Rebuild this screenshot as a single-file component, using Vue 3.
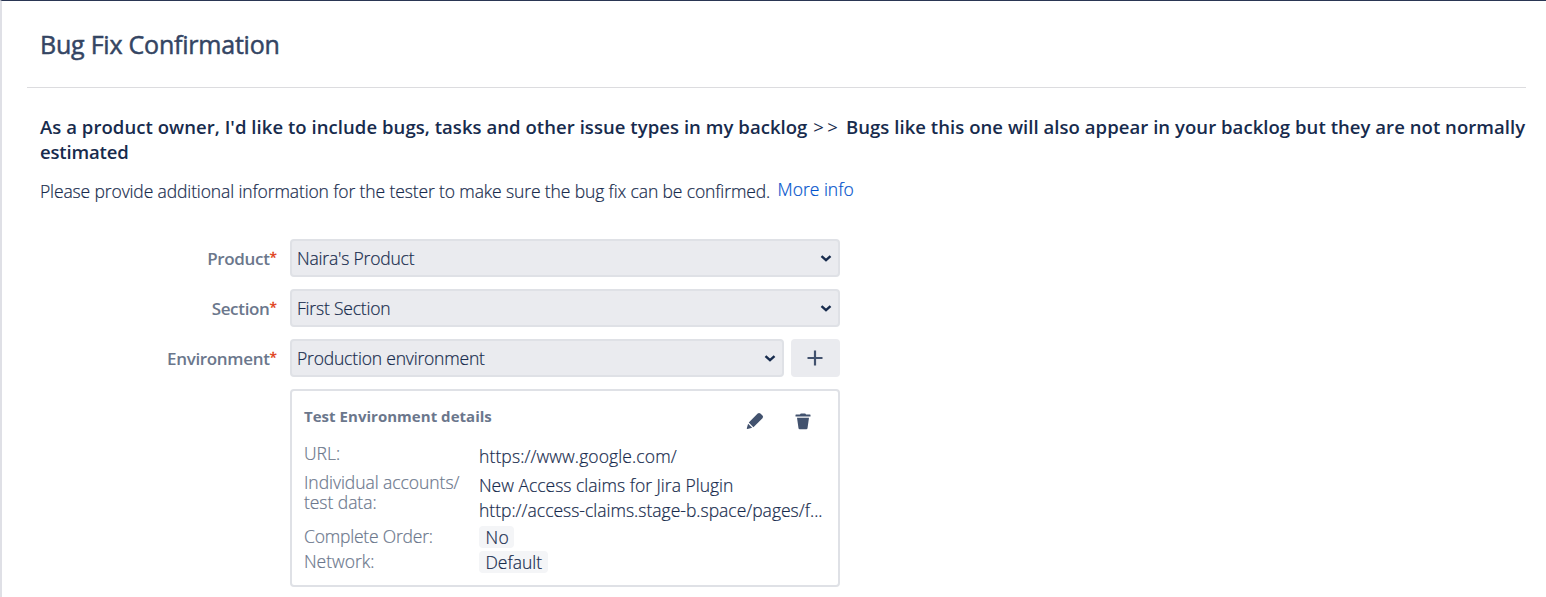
<script setup>
const fields = [
  { label: 'Product', value: "Naira's Product" },
  { label: 'Section', value: 'First Section' },
  { label: 'Environment', value: 'Production environment', add: true },
]
</script>

<template>
  <main class="page">
    <header class="head"><h1>Bug Fix Confirmation</h1></header>
    <section class="body">
      <h2>As a product owner, I'd like to include bugs, tasks and other issue types in my backlog <span class="gt">&gt;&gt;</span> Bugs like this one will also appear in your backlog but they are not normally<br><span class="last">estimated</span></h2>
      <p class="intro"><span class="copy">Please provide additional information for the tester to make sure the bug fix can be confirmed.</span><a class="more">More info</a></p>
      <div class="form">
        <div v-for="f in fields" :key="f.label" class="field">
          <label>{{ f.label }}<i>*</i></label>
          <div class="select">
            <span>{{ f.value }}</span>
            <svg class="chev" width="12" height="8" viewBox="0 0 12 8"><path d="M1.500 2.200 6 6.200 10.500 2.200" /></svg>
          </div>
          <button v-if="f.add" class="add" type="button" aria-label="Add environment">
            <svg width="16" height="16" viewBox="0 0 16 16"><path d="M8 .5v15M.5 8h15" /></svg>
          </button>
        </div>
        <div class="card">
          <div class="cardhead">
            <h3>Test Environment details</h3>
            <svg class="pencil" width="18" height="18" viewBox="0 0 18 18"><path d="M11.700 1.500Q13 .3 14.400 1.500L16.500 3.500Q17.700 4.900 16.500 6.200L7.400 15.200 2.800 10.600ZM2.100 11.700 6.200 15.800 1.500 17Q.6 17.100 .8 16.300Z" /></svg>
            <svg class="trash" width="16" height="17" viewBox="0 0 16 17"><path d="M.5 2Q.5 1.500 1 1.500H5Q5.200 .4 6.200 .4H9.800Q10.800 .4 11 1.500H15Q15.500 1.500 15.500 2V3.500H.5ZM2 4.700H14L12.500 15.200Q12.300 16.300 11.300 16.300H4.700Q3.700 16.300 3.500 15.200Z" /></svg>
          </div>
          <dl>
            <dt class="url">URL:</dt>
            <dd class="wide">https://www.google.com/</dd>
            <dt class="tight">Individual accounts/<br>test data:</dt>
            <dd>New Access claims for Jira Plugin<br>http://access-claims.stage-b.space/pages/f...</dd>
            <dt class="order">Complete Order:</dt>
            <dd><span class="tag no">No</span></dd>
            <dt>Network:</dt>
            <dd><span class="tag">Default</span></dd>
          </dl>
        </div>
      </div>
    </section>
  </main>
</template>

<style>
body { background: #fff; }
</style>
<style scoped>
* { box-sizing: border-box; margin: 0; padding: 0; }
.page { height: 597px; border-top: 1px solid #2a3654; border-left: 2px solid #dfe0e6; padding-left: 25px; font: 300 17.5px/25px "Open Sans", sans-serif; color: #172b4d; overflow: hidden; white-space: nowrap; -webkit-text-stroke: 0.2px; }
.head { width: 1499px; height: 87px; border-bottom: 1px solid #dcdcdf; padding: 27px 13px; }
h1 { font-size: 25px; line-height: 32px; font-weight: 400; color: #344563; letter-spacing: -0.22px; -webkit-text-stroke: 0.5px; }
.body { padding: 26px 0 0 13px; }
h2 { font-size: 18.5px; line-height: 25px; font-weight: 600; letter-spacing: 0.055px; -webkit-text-stroke: 0; }
.gt { font-weight: 400; letter-spacing: 3.3px; margin-left: 1px; }
.last { letter-spacing: -0.15px; }
.intro { display: flex; margin-top: 15px; }
.copy { letter-spacing: -0.125px; }
.more { color: #0052cc; margin: -2px 0 0 7.5px; }
.form { width: 800px; padding-top: 35px; }
.field { display: flex; height: 38px; margin-bottom: 12px; line-height: 38px; }
label { width: 237px; margin-right: 13px; padding-top: 1px; text-align: right; font-size: 17px; font-weight: 600; letter-spacing: -0.33px; color: #6b778c; -webkit-text-stroke: 0; }
i { font-size: 13.5px; line-height: 1; font-style: normal; font-weight: 400; letter-spacing: 0; vertical-align: 3px; color: #de350b; -webkit-text-stroke: 0.3px; }
.select { flex: 1; display: flex; justify-content: space-between; align-items: center; border: 2px solid #dfe1e6; border-radius: 4px; background: #eaebef; padding: 0 6px 0 5px; letter-spacing: -0.19px; }
.chev { fill: none; stroke: #172b4d; stroke-width: 2.4; }
.add { width: 49px; margin-left: 7px; border: 0; border-radius: 4px; background: #eaebef; display: flex; align-items: center; justify-content: center; padding-right: 1px; }
.add path { stroke: #42526e; stroke-width: 2.2; }
.card { margin-left: 250px; width: 550px; height: 198px; border: 2px solid #dfe1e6; border-radius: 4px; padding: 15px 12px 0; }
.cardhead { display: flex; height: 38px; fill: #42526e; }
h3 { flex: 1; font-size: 15px; line-height: 20px; font-weight: 700; letter-spacing: 0.03px; color: #6b778c; -webkit-text-stroke: 0; }
.pencil { margin: 6px 31px 0 0; }
.trash { margin: 7px 15px 0 0; }
dl { display: grid; grid-template-columns: 175px 1fr; grid-template-rows: 29px 52px 25px 25px; }
dt { color: #6b778c; margin-top: -1px; }
dt.url { margin-top: -3px; }
dt.tight { line-height: 20px; letter-spacing: -0.05px; }
dt.order { letter-spacing: -0.2px; }
dd.wide { letter-spacing: 0.11px; }
.tag { display: inline-block; height: 22px; line-height: 22px; padding: 0 5.500px 0 6.500px; border-radius: 4px; background: #f4f5f7; }
.tag.no { letter-spacing: 0.3px; }
</style>
